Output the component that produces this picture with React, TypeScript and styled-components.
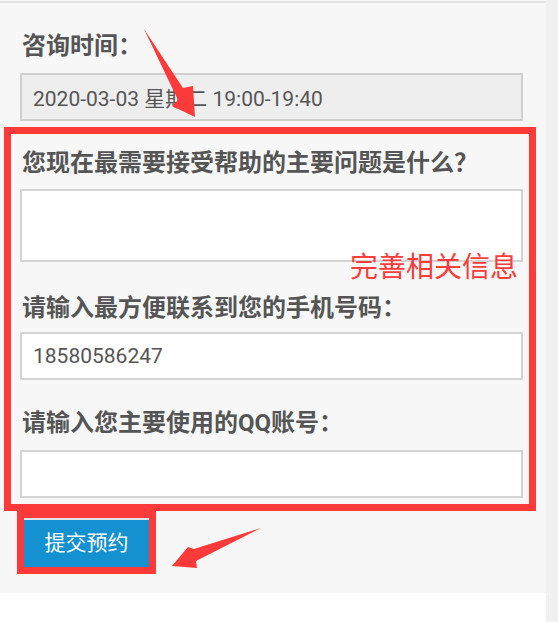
import React from "react";
import styled, { createGlobalStyle } from "styled-components";

const GlobalStyle = createGlobalStyle`
  html, body { margin: 0; padding: 0; background: #ffffff; }
  body { font-family: Roboto, "Noto Sans CJK SC", sans-serif; }
  * { box-sizing: border-box; }
`;

const Screen = styled.div`
  position: relative;
  display: flex;
  width: 558px;
  height: 622px;
  overflow: hidden;
  background: #ffffff;
`;

const Column = styled.div`
  flex: 0 0 546px;
  display: flex;
  flex-direction: column;
`;

const TopEdge = styled.div`
  height: 3px;
  background: #f7f7f7;
  border-bottom: 2px solid #e3e3e3;
`;

const Panel = styled.form`
  display: flex;
  flex-direction: column;
  align-items: stretch;
  background: #f7f7f7;
  padding: 0 23px 26px 20px;
`;

const Rail = styled.div`
  flex: 0 0 12px;
  background: #f0f0f0;
`;

const Label = styled.label<{ $gap: number }>`
  display: block;
  margin-top: ${(p) => p.$gap}px;
  padding-left: 2px;
  font-family: Roboto, "Noto Sans CJK SC", sans-serif;
  font-size: 24px;
  line-height: 30px;
  font-weight: 700;
  color: #555555;
  white-space: nowrap;
`;

const TextField = styled.input<{ $gap: number; $readonly?: boolean }>`
  display: block;
  width: 100%;
  height: 48px;
  margin: ${(p) => p.$gap}px 0 0 0;
  padding: 0 11px;
  border: 2px solid ${(p) => (p.$readonly ? "#d0d0d0" : "#d4d4d4")};
  border-radius: 0;
  background: ${(p) => (p.$readonly ? "#eeeeee" : "#ffffff")};
  font-family: Roboto, "Noto Sans CJK SC", sans-serif;
  font-size: 21px;
  line-height: 44px;
  color: #555555;
  outline: none;
`;

const TextArea = styled.textarea<{ $gap: number }>`
  display: block;
  width: 100%;
  height: 73px;
  margin: ${(p) => p.$gap}px 0 0 0;
  padding: 8px 11px;
  border: 2px solid #d4d4d4;
  border-radius: 0;
  background: #ffffff;
  font-family: Roboto, "Noto Sans CJK SC", sans-serif;
  font-size: 21px;
  color: #555555;
  resize: none;
  outline: none;
`;

const SubmitButton = styled.button`
  align-self: flex-start;
  width: 125px;
  height: 49px;
  margin: 20px 0 0 4px;
  padding: 0;
  border: none;
  border-top: 2px solid #dfe6ea;
  border-radius: 0;
  background: #1391d1;
  color: #ffffff;
  font-family: Roboto, "Noto Sans CJK SC", sans-serif;
  font-size: 21px;
  line-height: 47px;
  text-align: center;
`;

const Markup = styled.svg`
  position: absolute;
  left: 0;
  top: 0;
  pointer-events: none;
`;

const Note = styled.div`
  position: absolute;
  left: 350px;
  top: 251px;
  font-family: "Noto Sans CJK SC", sans-serif;
  font-size: 28px;
  line-height: 28px;
  font-weight: 400;
  color: #fc3b3b;
  white-space: nowrap;
  pointer-events: none;
`;

const RED = "#fc3a3a";

export default function App() {
  return (
    <>
      <GlobalStyle />
      <Screen>
        <Column>
          <TopEdge />
          <Panel onSubmit={(e) => e.preventDefault()}>
            <Label $gap={28}>咨询时间：</Label>
            <TextField $gap={12} $readonly readOnly value="2020-03-03 星期二 19:00-19:40" />
            <Label $gap={27}>您现在最需要接受帮助的主要问题是什么？</Label>
            <TextArea $gap={11} />
            <Label $gap={31}>请输入最方便联系到您的手机号码：</Label>
            <TextField $gap={9} defaultValue="18580586247" />
            <Label $gap={28}>请输入您主要使用的QQ账号：</Label>
            <TextField $gap={12} defaultValue="" />
            <SubmitButton type="submit">提交预约</SubmitButton>
          </Panel>
        </Column>
        <Rail />
        <Markup width={558} height={622} viewBox="0 0 558 622">
          <rect x={7.5} y={130.5} width={525} height={377} fill="none" stroke={RED} strokeWidth={7} />
          <rect x={20.5} y={514.5} width={132} height={56} fill="none" stroke={RED} strokeWidth={7} />
          <polygon points="144,29 183,88 193,86 195,117 172,106 178,100" fill={RED} />
          <polygon points="261,528 194,549 188,547 172,566 197,568 196,561" fill={RED} />
        </Markup>
        <Note>完善相关信息</Note>
      </Screen>
    </>
  );
}
